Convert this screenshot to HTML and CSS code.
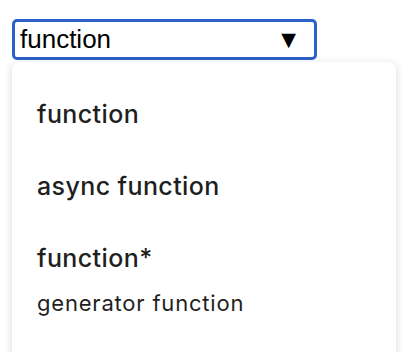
FILE: index.html
```html
<!DOCTYPE html>
<html lang="en">
<head>
    <meta charset="UTF-8">
    <meta name="viewport" content="width=device-width, initial-scale=1.0">
    <title>Function picker</title>
    <link rel="stylesheet" href="styles.css">
</head>
<body>
    <div class="picker">
        <div class="picker-select">
            <span>function</span>
            <span class="picker-arrow">&#9660;</span>
        </div>
        <ul class="picker-menu">
            <li class="picker-item">
                <div class="item-title">function</div>
            </li>
            <li class="picker-item">
                <div class="item-title">async function</div>
            </li>
            <li class="picker-item">
                <div class="item-title">function*</div>
                <div class="item-desc">generator function</div>
            </li>
        </ul>
    </div>
</body>
</html>
```

FILE: styles.css
```css
body {
    margin: 0;
    padding: 0;
    background-color: #fff;
    font-family: Inter, "Noto Sans", sans-serif;
    color: #1f1f1f;
    overflow: hidden;
}
.picker {
    padding: 19px 0 0 12px;
}
.picker-select {
    box-sizing: border-box;
    width: 305px;
    height: 41px;
    border: 3px solid #2a62c9;
    border-radius: 5px;
    display: flex;
    align-items: center;
    justify-content: space-between;
    padding: 0 13px 0 5px;
    font-family: "Liberation Sans", Arial, sans-serif;
    font-size: 26px;
    color: #000;
}
.picker-arrow {
    font-size: 25px;
}
.picker-menu {
    list-style: none;
    margin: 2px 0 0 0;
    padding: 16px 0;
    width: 384px;
    min-height: 320px;
    box-sizing: border-box;
    background-color: #fff;
    border-radius: 8px;
    box-shadow: 0 2px 8px rgba(0, 0, 0, 0.16);
}
.picker-item {
    padding: 22px 25px;
}
.item-title {
    font-size: 25px;
    line-height: 28px;
    font-weight: 500;
    letter-spacing: 0.4px;
}
.item-desc {
    margin-top: 19px;
    font-size: 22px;
    line-height: 24px;
    letter-spacing: 0.8px;
}
```
